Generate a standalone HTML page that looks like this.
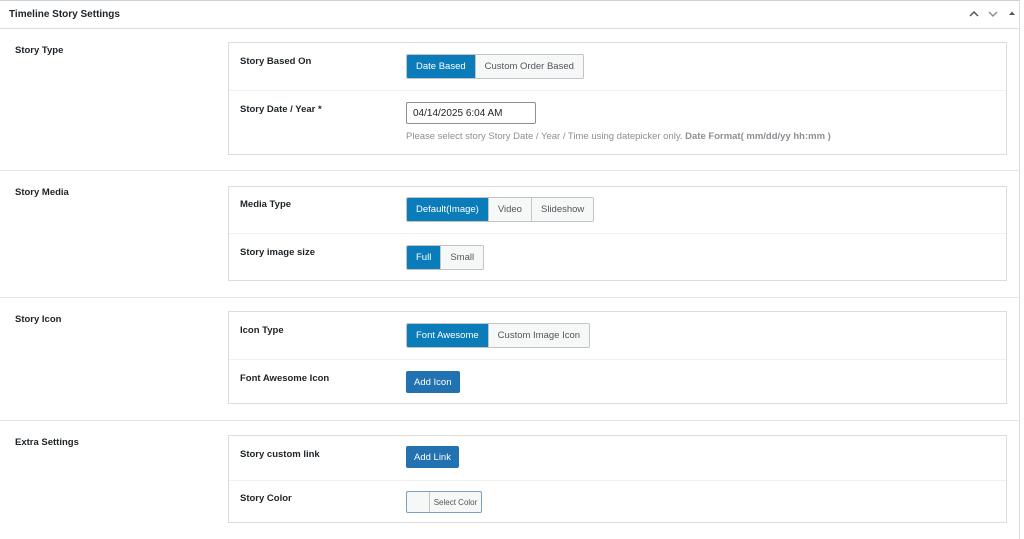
<!DOCTYPE html>
<html><head><style>
body{margin:0;width:1024px;height:539px;background:#fff;font-family:"Liberation Sans",sans-serif;font-size:10px;color:#1d2327;overflow:hidden;position:relative}
.abs{position:absolute}
.hdr{left:0;top:0;width:1019px;height:27px;border-top:1px solid #ccd0d4;border-bottom:1px solid #dcdcde;border-right:1px solid #dcdcde}
.title{left:9px;top:9px;font-weight:bold;font-size:10px}
.sep{left:0;width:1020px;height:1px;background:#e2e4e7}
.lab{left:15px;font-weight:bold;font-size:9.5px}
.box{left:228px;width:779px;border:1px solid #dcdcde;box-sizing:border-box}
.rl{left:240px;font-weight:bold;font-size:9.5px}
.rs{left:229px;width:777px;height:1px;background:#f0f0f1}
.bg{left:406px;height:25px;display:flex;border:1px solid #c3c4c7;border-radius:2px;box-sizing:border-box;overflow:hidden}
.bg span{display:flex;align-items:center;padding:0 9px;background:#f6f7f7;color:#50575e;font-size:9.5px;border-left:1px solid #c3c4c7}
.bg span.on{background:#0a7cba;color:#fff;border-left:none}
.btn{left:406px;height:22px;background:#2271b1;color:#fff;border-radius:2px;display:flex;align-items:center;padding:0 8px;font-size:9.5px}
.rbar{left:1019px;top:0;width:1px;height:539px;background:#dcdcde}
</style></head><body>
<div class="abs rbar"></div>
<div class="abs hdr"></div>
<div class="abs title">Timeline Story Settings</div>
<svg class="abs" style="left:966px;top:9px" width="58" height="10">
<polyline points="4,7 8,3 12,7" fill="none" stroke="#50575e" stroke-width="1.5"/>
<polyline points="23,3 27,7 31,3" fill="none" stroke="#8c8f94" stroke-width="1.5"/>
<polygon points="43,6 46,2.5 49,6" fill="#50575e"/>
</svg>

<div class="abs lab" style="top:45px">Story Type</div>
<div class="abs box" style="top:42px;height:113px"></div>
<div class="abs rl" style="top:56px">Story Based On</div>
<div class="abs bg" style="top:54px"><span class="on">Date Based</span><span>Custom Order Based</span></div>
<div class="abs rs" style="top:90px"></div>
<div class="abs rl" style="top:104px">Story Date / Year *</div>
<div class="abs" style="left:406px;top:102px;width:130px;height:22px;border:1px solid #8c8f94;border-radius:2px;box-sizing:border-box;padding:5px 6px;font-size:10px">04/14/2025 6:04 AM</div>
<div class="abs" style="left:406px;top:131px;color:#8c8f94;font-size:9.5px">Please select story Story Date / Year / Time using datepicker only. <b>Date Format( mm/dd/yy hh:mm )</b></div>
<div class="abs sep" style="top:170px"></div>

<div class="abs lab" style="top:187px">Story Media</div>
<div class="abs box" style="top:186px;height:95px"></div>
<div class="abs rl" style="top:199px">Media Type</div>
<div class="abs bg" style="top:197px"><span class="on">Default(Image)</span><span>Video</span><span>Slideshow</span></div>
<div class="abs rs" style="top:233px"></div>
<div class="abs rl" style="top:247px">Story image size</div>
<div class="abs bg" style="top:245px"><span class="on">Full</span><span>Small</span></div>
<div class="abs sep" style="top:297px"></div>

<div class="abs lab" style="top:314px">Story Icon</div>
<div class="abs box" style="top:311px;height:93px"></div>
<div class="abs rl" style="top:325px">Icon Type</div>
<div class="abs bg" style="top:323px"><span class="on">Font Awesome</span><span>Custom Image Icon</span></div>
<div class="abs rs" style="top:359px"></div>
<div class="abs rl" style="top:373px">Font Awesome Icon</div>
<div class="abs btn" style="top:371px">Add Icon</div>
<div class="abs sep" style="top:420px"></div>

<div class="abs lab" style="top:437px">Extra Settings</div>
<div class="abs box" style="top:435px;height:88px"></div>
<div class="abs rl" style="top:449px">Story custom link</div>
<div class="abs btn" style="top:446px">Add Link</div>
<div class="abs rs" style="top:480px"></div>
<div class="abs rl" style="top:493px">Story Color</div>
<div class="abs" style="left:406px;top:491px;width:76px;height:22px;border:1px solid #7e9fc4;border-radius:2px;box-sizing:border-box;display:flex;background:#f6f7f7">
<div style="width:22px;border-right:1px solid #c3c4c7"></div>
<div style="flex:1;display:flex;align-items:center;justify-content:center;font-size:8px;color:#50575e">Select Color</div></div>
</body></html>
